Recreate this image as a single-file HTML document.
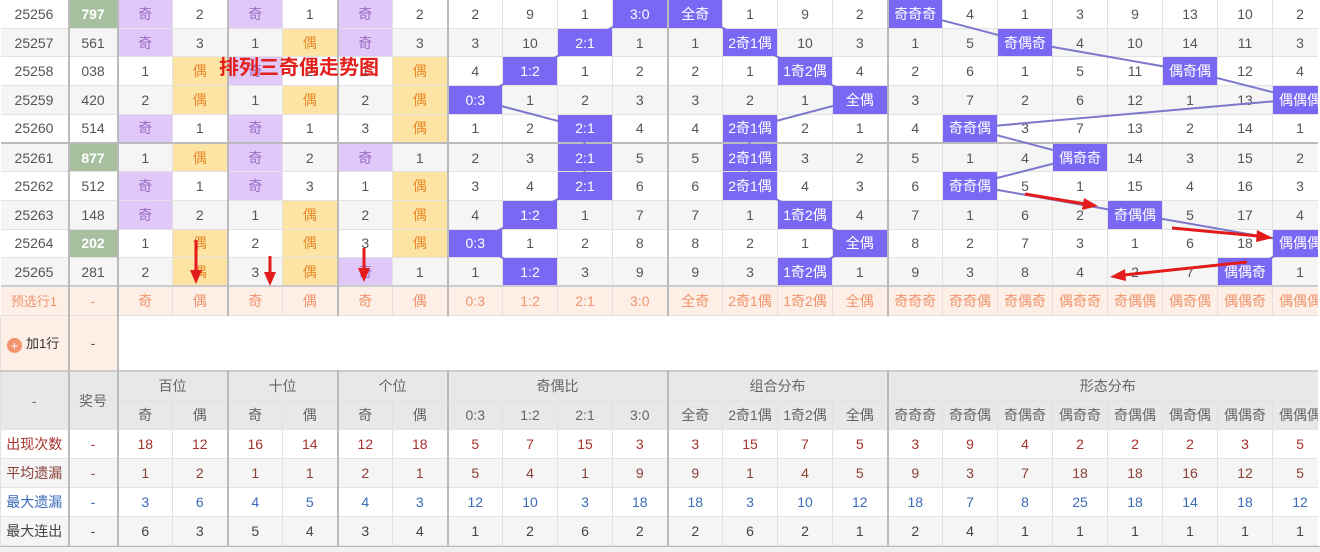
<!DOCTYPE html>
<html><head><meta charset="utf-8">
<style>
body{margin:0;width:1320px;height:551px;overflow:hidden;background:#fff;font-family:"Liberation Sans","Noto Sans CJK SC",sans-serif;}
#wrap{position:absolute;left:0;top:0;width:1318px;height:546px;overflow:hidden;}
table{position:absolute;left:0;top:-1px;border-collapse:collapse;table-layout:fixed;width:1327px;font-size:14px;color:#555;}
td{border:1px solid #e2e2e2;text-align:center;padding:0;overflow:hidden;white-space:nowrap;}
tr.d{height:28.7px}
tr.d:nth-child(even) td{background:#f5f5f5}
tr.d td:nth-child(2),tr.d td:nth-child(3),tr.d td:nth-child(5),tr.d td:nth-child(7),tr.d td:nth-child(9),tr.d td:nth-child(13),tr.d td:nth-child(17){border-left:2px solid #bbb}
tr.d td:first-child{border-left:none}
tr.sep td{border-top:2px solid #bbb}
td.h{background:#7a68f5!important;color:#fff;position:relative;z-index:2}
td.p{background:#e0c8f8!important;color:#9a6cc6}
td.y{background:#fde3a4!important;color:#e98a2a}
td.g{background:#a6bf9e!important;color:#fff;font-weight:bold}
tr.pre td{background:#fdeee6!important;color:#f0956d}
tr.add{height:56px}
tr.hd td{background:#e8e8e8!important;color:#666;height:28px}
.c1 td{color:#a8322e}
.c2 td{color:#8a4038}
.c3 td{color:#3c6bb8}
.c4 td{color:#444}
tr.st{height:29px}
tr.st:nth-child(even) td{background:#f5f5f5}
tr.st td:nth-child(2),tr.st td:nth-child(3),tr.st td:nth-child(5),tr.st td:nth-child(7),tr.st td:nth-child(9),tr.st td:nth-child(13),tr.st td:nth-child(17){border-left:2px solid #bbb}
.tl{border-left:2px solid #bbb!important}
svg{position:absolute;left:0;top:0;}
</style></head><body>
<div id="wrap">
<svg width="1320" height="551" style="z-index:1"><g stroke="#7b78cc" stroke-width="2" fill="none">
<polyline points="639.5,13 584.5,42 529.5,71 474.5,99 584.5,128 584.5,157 584.5,185 529.5,214 474.5,243 529.5,272"/>
<polyline points="694.5,13 749.5,42 804.5,71 859.5,99 749.5,128 749.5,157 749.5,185 804.5,214 859.5,243 804.5,272"/>
<polyline points="960,-10 914.5,13 1024.5,42 1189.5,71 1299.5,99 969.5,128 1079.5,157 969.5,185 1134.5,214 1299.5,243 1244.5,272"/>
</g></svg>
<table>
<colgroup><col style="width:68px"><col style="width:49px"><col span="22" style="width:55px"></colgroup>
<tr class="d"><td>25256</td><td class="g">797</td><td class="p">奇</td><td>2</td><td class="p">奇</td><td>1</td><td class="p">奇</td><td>2</td><td>2</td><td>9</td><td>1</td><td class="h">3:0</td><td class="h">全奇</td><td>1</td><td>9</td><td>2</td><td class="h">奇奇奇</td><td>4</td><td>1</td><td>3</td><td>9</td><td>13</td><td>10</td><td>2</td></tr>
<tr class="d"><td>25257</td><td>561</td><td class="p">奇</td><td>3</td><td>1</td><td class="y">偶</td><td class="p">奇</td><td>3</td><td>3</td><td>10</td><td class="h">2:1</td><td>1</td><td>1</td><td class="h">2奇1偶</td><td>10</td><td>3</td><td>1</td><td>5</td><td class="h">奇偶奇</td><td>4</td><td>10</td><td>14</td><td>11</td><td>3</td></tr>
<tr class="d"><td>25258</td><td>038</td><td>1</td><td class="y">偶</td><td class="p">奇</td><td>2</td><td>1</td><td class="y">偶</td><td>4</td><td class="h">1:2</td><td>1</td><td>2</td><td>2</td><td>1</td><td class="h">1奇2偶</td><td>4</td><td>2</td><td>6</td><td>1</td><td>5</td><td>11</td><td class="h">偶奇偶</td><td>12</td><td>4</td></tr>
<tr class="d"><td>25259</td><td>420</td><td>2</td><td class="y">偶</td><td>1</td><td class="y">偶</td><td>2</td><td class="y">偶</td><td class="h">0:3</td><td>1</td><td>2</td><td>3</td><td>3</td><td>2</td><td>1</td><td class="h">全偶</td><td>3</td><td>7</td><td>2</td><td>6</td><td>12</td><td>1</td><td>13</td><td class="h">偶偶偶</td></tr>
<tr class="d"><td>25260</td><td>514</td><td class="p">奇</td><td>1</td><td class="p">奇</td><td>1</td><td>3</td><td class="y">偶</td><td>1</td><td>2</td><td class="h">2:1</td><td>4</td><td>4</td><td class="h">2奇1偶</td><td>2</td><td>1</td><td>4</td><td class="h">奇奇偶</td><td>3</td><td>7</td><td>13</td><td>2</td><td>14</td><td>1</td></tr>
<tr class="d sep"><td>25261</td><td class="g">877</td><td>1</td><td class="y">偶</td><td class="p">奇</td><td>2</td><td class="p">奇</td><td>1</td><td>2</td><td>3</td><td class="h">2:1</td><td>5</td><td>5</td><td class="h">2奇1偶</td><td>3</td><td>2</td><td>5</td><td>1</td><td>4</td><td class="h">偶奇奇</td><td>14</td><td>3</td><td>15</td><td>2</td></tr>
<tr class="d"><td>25262</td><td>512</td><td class="p">奇</td><td>1</td><td class="p">奇</td><td>3</td><td>1</td><td class="y">偶</td><td>3</td><td>4</td><td class="h">2:1</td><td>6</td><td>6</td><td class="h">2奇1偶</td><td>4</td><td>3</td><td>6</td><td class="h">奇奇偶</td><td>5</td><td>1</td><td>15</td><td>4</td><td>16</td><td>3</td></tr>
<tr class="d"><td>25263</td><td>148</td><td class="p">奇</td><td>2</td><td>1</td><td class="y">偶</td><td>2</td><td class="y">偶</td><td>4</td><td class="h">1:2</td><td>1</td><td>7</td><td>7</td><td>1</td><td class="h">1奇2偶</td><td>4</td><td>7</td><td>1</td><td>6</td><td>2</td><td class="h">奇偶偶</td><td>5</td><td>17</td><td>4</td></tr>
<tr class="d"><td>25264</td><td class="g">202</td><td>1</td><td class="y">偶</td><td>2</td><td class="y">偶</td><td>3</td><td class="y">偶</td><td class="h">0:3</td><td>1</td><td>2</td><td>8</td><td>8</td><td>2</td><td>1</td><td class="h">全偶</td><td>8</td><td>2</td><td>7</td><td>3</td><td>1</td><td>6</td><td>18</td><td class="h">偶偶偶</td></tr>
<tr class="d"><td>25265</td><td>281</td><td>2</td><td class="y">偶</td><td>3</td><td class="y">偶</td><td class="p">奇</td><td>1</td><td>1</td><td class="h">1:2</td><td>3</td><td>9</td><td>9</td><td>3</td><td class="h">1奇2偶</td><td>1</td><td>9</td><td>3</td><td>8</td><td>4</td><td>2</td><td>7</td><td class="h">偶偶奇</td><td>1</td></tr>
<tr class="d pre" style="border-top:2px solid #ccc"><td style="font-size:13px">预选行1</td><td>-</td><td>奇</td><td>偶</td><td>奇</td><td>偶</td><td>奇</td><td>偶</td><td>0:3</td><td>1:2</td><td>2:1</td><td>3:0</td><td>全奇</td><td>2奇1偶</td><td>1奇2偶</td><td>全偶</td><td>奇奇奇</td><td>奇奇偶</td><td>奇偶奇</td><td>偶奇奇</td><td>奇偶偶</td><td>偶奇偶</td><td>偶偶奇</td><td>偶偶偶</td></tr>
<tr class="add"><td style="background:#fdeee6;color:#333;font-size:13px;text-align:left;padding-left:6px"><span style="display:inline-block;width:15px;height:15px;border-radius:50%;background:#f0956d;color:#fff;font-size:13px;line-height:15px;text-align:center;vertical-align:-2px;margin-right:4px">+</span>加1行</td><td class="tl" style="background:#fdeee6">-</td><td class="tl" colspan="22" style="background:#fff"></td></tr>
<tr class="hd" style="border-top:2px solid #ccc"><td rowspan="2">-</td><td rowspan="2" class="tl">奖号</td><td colspan="2" class="tl">百位</td><td colspan="2" class="tl">十位</td><td colspan="2" class="tl">个位</td><td colspan="4" class="tl">奇偶比</td><td colspan="4" class="tl">组合分布</td><td colspan="8" class="tl">形态分布</td></tr>
<tr class="hd"><td class="tl">奇</td><td>偶</td><td class="tl">奇</td><td>偶</td><td class="tl">奇</td><td>偶</td><td class="tl">0:3</td><td>1:2</td><td>2:1</td><td>3:0</td><td class="tl">全奇</td><td>2奇1偶</td><td>1奇2偶</td><td>全偶</td><td class="tl">奇奇奇</td><td>奇奇偶</td><td>奇偶奇</td><td>偶奇奇</td><td>奇偶偶</td><td>偶奇偶</td><td>偶偶奇</td><td>偶偶偶</td></tr>
<tr class="st c1"><td>出现次数</td><td>-</td><td>18</td><td>12</td><td>16</td><td>14</td><td>12</td><td>18</td><td>5</td><td>7</td><td>15</td><td>3</td><td>3</td><td>15</td><td>7</td><td>5</td><td>3</td><td>9</td><td>4</td><td>2</td><td>2</td><td>2</td><td>3</td><td>5</td></tr>
<tr class="st c2"><td>平均遗漏</td><td>-</td><td>1</td><td>2</td><td>1</td><td>1</td><td>2</td><td>1</td><td>5</td><td>4</td><td>1</td><td>9</td><td>9</td><td>1</td><td>4</td><td>5</td><td>9</td><td>3</td><td>7</td><td>18</td><td>18</td><td>16</td><td>12</td><td>5</td></tr>
<tr class="st c3"><td>最大遗漏</td><td>-</td><td>3</td><td>6</td><td>4</td><td>5</td><td>4</td><td>3</td><td>12</td><td>10</td><td>3</td><td>18</td><td>18</td><td>3</td><td>10</td><td>12</td><td>18</td><td>7</td><td>8</td><td>25</td><td>18</td><td>14</td><td>18</td><td>12</td></tr>
<tr class="st c4"><td>最大连出</td><td>-</td><td>6</td><td>3</td><td>5</td><td>4</td><td>3</td><td>4</td><td>1</td><td>2</td><td>6</td><td>2</td><td>2</td><td>6</td><td>2</td><td>1</td><td>2</td><td>4</td><td>1</td><td>1</td><td>1</td><td>1</td><td>1</td><td>1</td></tr>
</table>
<div style="position:absolute;left:219px;top:52px;z-index:3;color:#e3201c;font-size:20px;font-weight:bold;font-family:'Noto Sans CJK SC',sans-serif;line-height:28px">排列三奇偶走势图</div>
<svg width="1320" height="551" style="z-index:4"><g fill="#e31b1b" stroke="#e31b1b">
<line x1="196" y1="240" x2="196" y2="272" stroke-width="3"/><polygon points="190,270 202,270 196,284" stroke="none"/>
<line x1="270" y1="256" x2="270" y2="274" stroke-width="3"/><polygon points="264,272 276,272 270,286" stroke="none"/>
<line x1="364" y1="248" x2="364" y2="270" stroke-width="3"/><polygon points="358,268 370,268 364,282" stroke="none"/>
<line x1="1025" y1="194" x2="1085" y2="204" stroke-width="3"/><polygon points="1084,198 1098,206 1082,210" stroke="none"/>
<line x1="1172" y1="228" x2="1258" y2="236" stroke-width="3"/><polygon points="1257,230 1273,238 1256,242" stroke="none"/>
<line x1="1247" y1="262" x2="1124" y2="275" stroke-width="3"/><polygon points="1125,269 1110,277 1126,281" stroke="none"/>
</g></svg>
</div>
<div style="position:absolute;left:0;top:546px;width:1320px;height:5px;background:#f0f0f0;border-top:1px solid #bbb"></div>
</body></html>
